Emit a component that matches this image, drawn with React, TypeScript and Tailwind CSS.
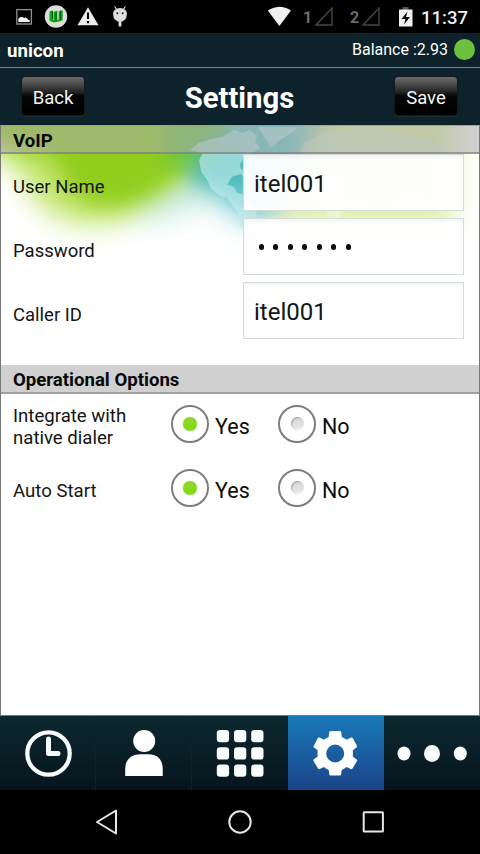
import React from "react";

function StatusBar() {
  return (
    <div className="flex h-[33px] shrink-0 items-center bg-black">
      <svg width="135" height="33" viewBox="0 0 135 33">
        <rect x="16.8" y="9.6" width="14.6" height="14.4" fill="#050505" stroke="#8f8f8f" strokeWidth="1.3" />
        <path d="M18.3 22v-3l1.6-1.7 2.5-.4 2 1.2 1-.8 1.8 1.2.9 1.2 1.6.4V22z" fill="#f2f2f2" />
        <circle cx="56" cy="16.5" r="11.2" fill="#dcded8" />
        <path d="M49.5 11.5l3-1.3v8.6q0 1.2 1 1.2V12l3.8-1.6V20l1.4-.5v-8.3l4-1V20l-2.5 1.2-6.5 1.4-4.2-1.8z" fill="#08a51a" />
        <path d="M52.5 11v8M56 12.5v9M60.5 10.5v9" stroke="#075d12" strokeWidth="1" />
        <path d="M88 7.3L98.5 25.3H77.5z" fill="#eee" />
        <path d="M88 12.6v6.5M88 21v2.2" stroke="#080808" strokeWidth="2.2" />
        <path d="M113.2 12.5h13.6v2.2a6.8 7.2 0 0 1-13.6 0z" fill="#ddd" />
        <path d="M113.2 13.5a6.8 5.6 0 0 1 13.6 0zM118.6 20h2.8v6.5h-2.8z" fill="#ddd" />
        <path d="M114.5 6.5l2.3 3M125.5 6.5l-2.3 3" stroke="#ddd" strokeWidth="1.2" />
        <circle cx="117.3" cy="13.2" r="1" fill="#222" />
        <circle cx="122.7" cy="13.2" r="1" fill="#222" />
      </svg>
      <svg className="ml-auto shrink-0" width="30" height="33" viewBox="4 0 30 33">
        <path d="M3.8 10.5Q15 3 27 10.5L15.4 26z" fill="#f0f0f0" />
      </svg>
      <span className="ml-[5px] w-[12px] pt-[2px] text-[16px] leading-none font-bold text-[#6b6b6b]">1</span>
      <svg className="shrink-0" width="19" height="19" viewBox="0 0 19 19">
        <path d="M1 18H17V1z" fill="none" stroke="#454545" strokeWidth="1.4" />
      </svg>
      <span className="ml-[16px] w-[12px] pt-[2px] text-[16px] leading-none font-bold text-[#6b6b6b]">2</span>
      <svg className="shrink-0" width="19" height="19" viewBox="0 0 19 19">
        <path d="M1 18H17V1z" fill="none" stroke="#454545" strokeWidth="1.4" />
      </svg>
      <svg className="mr-[1px] ml-[17px] shrink-0" width="16" height="20" viewBox="0 0 16 20">
        <path d="M4.5 0h6v3h-6z" fill="#555" />
        <path d="M1 2.5h13.5v17H1z" fill="#f0f0f0" />
        <path d="M9.5 4.5L3.5 12h4L6 17.5 12 10H8z" fill="#000" />
      </svg>
      <span className="ml-[6px] w-[59px] pt-[3px] text-[18.5px] leading-none font-medium text-[#eee]">11:37</span>
    </div>
  );
}

function HeaderButton({ label }: { label: string }) {
  return (
    <button className="mb-[1px] flex h-[40px] w-[64px] items-center justify-center rounded-[4px] border border-[#15191c] bg-[linear-gradient(#6b6b6b_0%,#454545_22%,#232323_40%,#050505_50%,#000_100%)] pt-[5px] text-[18.5px] text-[#f4f4f4] shadow-[0_1px_1px_#1d3038]">
      {label}
    </button>
  );
}

function Backdrop() {
  return (
    <svg className="absolute inset-0 h-full w-full" viewBox="0 125 480 591" preserveAspectRatio="none">
      <defs>
        <filter id="soft" x="-50%" y="-50%" width="200%" height="200%"><feGaussianBlur stdDeviation="14" /></filter>
        <filter id="mid" x="-50%" y="-50%" width="200%" height="200%"><feGaussianBlur stdDeviation="10" /></filter>
        <filter id="edge"><feGaussianBlur stdDeviation="0.7" /></filter>
      </defs>
      <g filter="url(#soft)">
        <path d="M-40 60H240V155Q190 178 150 205Q115 230 70 220Q35 210 28 185Q20 162 -40 138z" fill="#c0e466" />
        <path d="M130 215Q180 170 245 150L255 210Q205 195 165 222z" fill="#a0dccb" opacity=".5" />
        <path d="M205 60H380V165L300 215 242 220 222 196 190 180z" fill="#62c6cb" />
        <path d="M330 60H455V225H370L268 222 310 160z" fill="#deeea0" />
      </g>
      <g filter="url(#mid)">
        <path d="M-30 80H225V155Q185 170 155 190Q120 212 88 202Q62 190 58 160L-30 133z" fill="#90cd1c" />
        <path d="M165 80H228L225 150L192 170 165 164z" fill="#62c14a" opacity=".75" />
        <path d="M204 140H245V192Q228 180 190 180z" fill="#3fb5ac" opacity=".8" />
      </g>
      <g fill="#c4ecef" filter="url(#edge)" opacity=".62">
        <path d="M190 149l8-7 13-4 11-2 12-7 9 3 7-3 7 6-2 6 6 6-9 5-8 5-4 6 1 6 6-1 2 8-4 4-4-7-9 3-5 8 7 2 3 6 7 2 7 8 6 8-3 9-8 10-5-2-3-15-7-10-4-5-7-2-9-7-4-9-6-8-2-12 4-7z" />
        <path d="M258 126h40l-6 6-12 7-9 8-6-10z" />
        <path d="M301 150l4-9 10-4 8-7 10-2 6 5 12-3 10-6 18 3 13 6 27 2 18 7 13 4-8 3-7 6-14 2-5 14-13-3-9 13-10-15-21 5-11 17-9-12-12-7-9 2-12-9z" fill="#d5ead0" />
        <path d="M318 176h20l10 12-2 15-8 17-10-5-3-14-14-6v-10z" fill="#eff7e0" />
        <path d="M398 191l16-4 11 10-10 11-18-5z" fill="#eaf2c0" />
      </g>
    </svg>
  );
}

function SectionTitle({ label, className }: { label: string; className: string }) {
  return (
    <h2 className={`relative flex shrink-0 items-center pt-[4px] pl-[12px] text-[18.6px] leading-none font-bold text-[#080808] ${className}`}>
      {label}
    </h2>
  );
}

function Field({ label, value, secret }: { label: string; value: string; secret?: boolean }) {
  return (
    <div className="relative flex h-[64px] items-center pr-[15px] pl-[12px]">
      <label className="w-[230px] pt-[3px] text-[18.5px] text-[#141414]">{label}</label>
      <div className="mb-[7px] flex h-[57px] flex-1 items-center border border-[#d5dcd8] bg-white/94 pt-[2px] pl-[10px] text-[24px] text-[#141414] shadow-[inset_0_3px_3px_#0000000a]">
        {secret ? (
          <div className="flex gap-[9.6px] pb-[2px] pl-[4.5px]" aria-label={value}>
            {Array.from(value).map((_, i) => (
              <span key={i} className="h-[6px] w-[5px] rounded-full bg-[#0b0b0b]" />
            ))}
          </div>
        ) : (
          value
        )}
      </div>
    </div>
  );
}

function Radio({ label, on }: { label: string; on?: boolean }) {
  return (
    <div className="flex w-[107px] items-center">
      <span className="flex size-[38px] items-center justify-center rounded-full border-2 border-[#7d7d7d] bg-white">
        {on ? (
          <span className="size-[14px] rounded-full bg-[linear-gradient(#8ed52d,#80dc16)] shadow-[0_0_1px_#6da823]" />
        ) : (
          <span className="size-[13px] rounded-full bg-[linear-gradient(#d2d2d2,#ececec)] shadow-[inset_1px_1px_1px_#aaa]" />
        )}
      </span>
      <span className="pt-[7px] pl-[6px] text-[21.5px] leading-none text-[#0c0c0c]">{label}</span>
    </div>
  );
}

function OptionRow({ label }: { label: string }) {
  return (
    <div className="relative flex h-[64px] items-center pb-[5px] pl-[12px]">
      <span className="w-[158px] pt-[7px] pr-[30px] text-[18.6px] leading-[22px] text-[#141414]">{label}</span>
      <Radio label="Yes" on />
      <Radio label="No" />
    </div>
  );
}

function Tabs() {
  const tab = "flex w-[96px] items-center justify-center";
  return (
    <nav className="flex h-[74px] shrink-0 bg-[linear-gradient(#0d2830,#06151d)]">
      <div className={`${tab} border-r border-[#0d232b]`}>
        <svg width="48" height="48" viewBox="0 0 48 48" fill="none" stroke="#f5fafa" strokeLinecap="round" strokeLinejoin="round">
          <circle cx="24.5" cy="24.5" r="21.2" strokeWidth="4.3" />
          <path d="M24.5 10V24.5H34" strokeWidth="5" />
        </svg>
      </div>
      <div className={`${tab} border-r border-[#0d232b]`}>
        <svg width="48" height="48" viewBox="0 0 48 48" fill="#fff">
          <circle cx="24.2" cy="12" r="11" />
          <path d="M5.2 47V40C5.2 31 11 25.3 20 25.3H28.7C37.7 25.3 42.7 31 42.7 40V47z" />
        </svg>
      </div>
      <div className={tab}>
        <svg width="48" height="48" viewBox="0 0 48 48" fill="#f8fcfc">
          {[1, 18.3, 35.5].map((y) => [0.8, 18, 35.2].map((x) => <rect key={`${x}-${y}`} x={x} y={y} width="12.3" height="12.3" rx="3.2" />))}
        </svg>
      </div>
      <div className={`${tab} bg-[linear-gradient(#1979b9,#1b4488)]`}>
        <svg width="48" height="48" viewBox="0.5 -0.5 48 48">
          <path fill="#fff" fillRule="evenodd" d="M17.8 2.5Q18 1.5 19 1.5H28.5Q29.5 1.5 29.7 2.5L30.3 7.5Q33 8.5 35.2 10.2L39.5 8Q40.5 7.6 41.2 8.6L45.5 16.5Q45.8 17.4 45 18L41.3 20.7Q41.7 23.8 41.3 27L45.2 30Q46 30.7 45.4 31.7L41 39Q40.2 40 39.2 39.5L35 37.6Q32.8 39.5 30.2 40.5L29.6 45Q29.4 46 28.4 46H19Q18 46 17.8 45L17.2 40.5Q14.5 39.5 12.4 37.6L8.2 39.5Q7.2 40 6.5 39L2 31.5Q1.5 30.5 2.3 29.8L6.2 27Q5.8 23.8 6.2 20.7L2.5 18Q1.7 17.4 2.2 16.5L6.4 8.6Q7.2 7.6 8.2 8L12.3 10.2Q14.5 8.5 17.2 7.5zM32.7 24A9 9 0 1 0 14.7 24A9 9 0 1 0 32.7 24z" />
        </svg>
      </div>
      <div className={tab}>
        <svg width="72" height="20" viewBox="0 -0.5 72 20" fill="#fafcfc">
          <ellipse cx="8" cy="10" rx="6.5" ry="7" />
          <ellipse cx="36" cy="10" rx="8" ry="8.5" />
          <ellipse cx="64.3" cy="10" rx="6.5" ry="7" />
        </svg>
      </div>
    </nav>
  );
}

function NavigationBar() {
  return (
    <div className="flex h-[64px] shrink-0 items-center justify-center bg-black">
      <svg width="290" height="30" viewBox="95 807 290 30" fill="none" stroke="#e6e6e6" strokeWidth="2">
        <path d="M97 822L116 810.5V833.5z" strokeLinejoin="round" />
        <circle cx="240" cy="822" r="10.7" />
        <rect x="363.7" y="812.2" width="19.2" height="19.2" rx="0.5" />
      </svg>
    </div>
  );
}

export default function App() {
  return (
    <div className="flex h-[854px] w-[480px] flex-col overflow-hidden bg-black font-['Roboto',sans-serif]">
      <StatusBar />
      <div className="flex h-[35px] shrink-0 items-center border-b border-[#77858a] bg-[#0d222a] pr-[5px] pl-[7px] text-white">
        <span className="pt-[3px] text-[18.7px] leading-none font-bold">unicon</span>
        <span className="ml-auto text-[16px]">Balance :2.93</span>
        <span className="mb-[2px] ml-[6px] size-[21px] rounded-full bg-[#6cc13f]" />
      </div>
      <header className="flex h-[57px] shrink-0 items-center justify-between bg-[#0d222a] pr-[22px] pl-[21px]">
        <HeaderButton label="Back" />
        <h1 className="pt-[4px] text-[29.3px] leading-none font-bold text-white">Settings</h1>
        <HeaderButton label="Save" />
      </header>
      <main className="relative flex h-[591px] shrink-0 flex-col overflow-hidden border border-t-[#9aa0a0] border-r-[#777] border-b-[#777] border-l-[#777] bg-white">
        <Backdrop />
        <SectionTitle label="VoIP" className="h-[28px] border-b-2 border-[#77777799] bg-[#aaaaaa8c]" />
        <div className="h-[211px] shrink-0">
          <Field label="User Name" value="itel001" />
          <Field label="Password" value="itel001" secret />
          <Field label="Caller ID" value="itel001" />
        </div>
        <SectionTitle label="Operational Options" className="h-[29px] border-b-2 border-[#a0a0a0] bg-[#d0d0d0]" />
        <OptionRow label="Integrate with native dialer" />
        <OptionRow label="Auto Start" />
      </main>
      <Tabs />
      <NavigationBar />
    </div>
  );
}
